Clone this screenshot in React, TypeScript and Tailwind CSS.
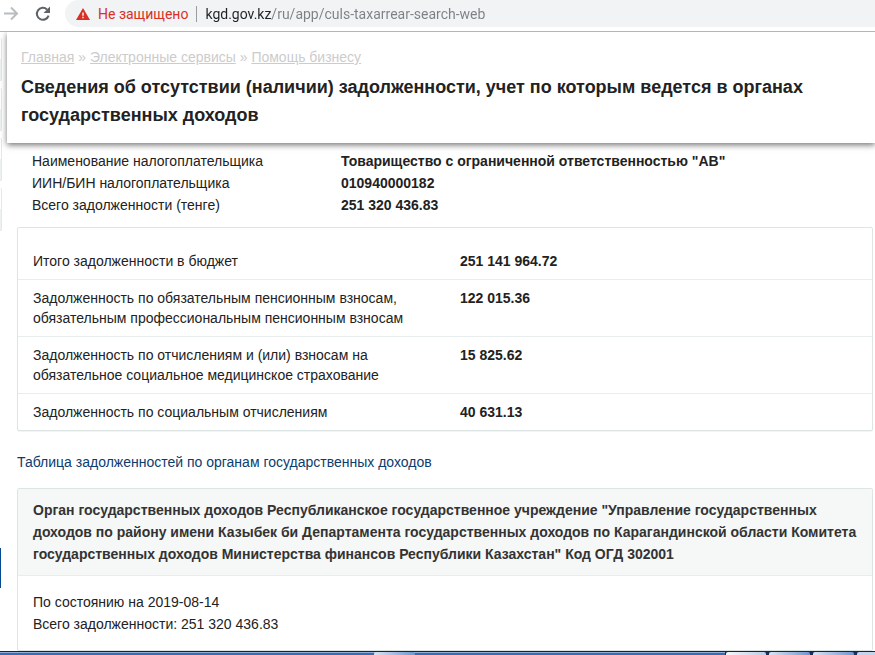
import { useState } from "react";

const crumbs = ["Главная", "Электронные сервисы", "Помощь бизнесу"];

const taxpayer = [
  { label: "Наименование налогоплательщика", value: 'Товарищество с ограниченной ответственностью "АВ"' },
  { label: "ИИН/БИН налогоплательщика", value: "010940000182" },
  { label: "Всего задолженности (тенге)", value: "251 320 436.83" },
];

const arrears = [
  { label: "Итого задолженности в бюджет", value: "251 141 964.72" },
  {
    label: "Задолженность по обязательным пенсионным взносам, обязательным профессиональным пенсионным взносам",
    value: "122 015.36",
  },
  {
    label: "Задолженность по отчислениям и (или) взносам на обязательное социальное медицинское страхование",
    value: "15 825.62",
  },
  { label: "Задолженность по социальным отчислениям", value: "40 631.13" },
];

function Toolbar() {
  const [url, setUrl] = useState("kgd.gov.kz/ru/app/culs-taxarrear-search-web");

  return (
    <header className="flex h-8 items-start border-b border-[#b6b4b6] bg-white font-[Roboto,sans-serif] text-sm">
      <div className="flex h-[27px] w-[65px] shrink-0 items-center gap-4 pl-1">
        <button type="button" aria-label="Вперед" className="text-[#babcbe]">
          <svg width="15" height="14" viewBox="0 0 15 14" fill="none" stroke="currentColor" strokeWidth="2">
            <path d="M0 6.5h13M7 .5l6 6-6 6" />
          </svg>
        </button>
        <button type="button" aria-label="Обновить" className="text-[#5f6368]">
          <svg width="16" height="16" viewBox="0 0 16 16">
            <path d="M13.6 9.6A6 6 0 1 1 12 3.4" fill="none" stroke="currentColor" strokeWidth="2" />
            <path d="M15 .5v6.5H8.5z" fill="currentColor" />
          </svg>
        </button>
      </div>
      <div className="flex h-[27px] min-w-0 flex-1 items-center rounded-l-full bg-[#f1f3f4] pl-[11px]">
        <svg width="14" height="12" viewBox="0 0 14 12" className="shrink-0">
          <path d="M7 0l7 12H0z" fill="#d93025" />
          <path d="M6.3 4.5h1.4v3.2H6.3zM6.3 8.8h1.4v1.4H6.3z" fill="#fff" />
        </svg>
        <span className="ml-2 whitespace-nowrap text-[#d93025]">Не защищено</span>
        <span className="mx-2 h-4 w-px shrink-0 bg-[#9a9c9f]" />
        <input
          type="text"
          aria-label="Адресная строка"
          value={url}
          onChange={(e) => setUrl(e.target.value)}
          className="min-w-0 flex-1 bg-[linear-gradient(90deg,#202124_67px,#7c8084_67px)] bg-clip-text text-transparent outline-none"
        />
      </div>
    </header>
  );
}

function SideTabs() {
  return (
    <aside className="flex w-[7px] shrink-0 flex-col gap-[7px] pt-[6px]">
      {[0, 1, 2, 3].map((i) => (
        <div
          key={i}
          className="h-[43px] w-[2px] rounded-r-sm border-r border-b border-[#e3e8e8] bg-[linear-gradient(#ffffff_50%,#eef1f1_50%)]"
        />
      ))}
      <div className="mt-[310px] h-10 w-px bg-[#064a92]" />
    </aside>
  );
}

function PageHeader() {
  return (
    <div className="bg-white px-[14px] py-[14px] shadow-[0_2px_6px_rgba(0,0,0,0.55)]">
      <nav className="leading-[22px] text-[#cccccc]">
        {crumbs.map((c, i) => (
          <span key={c}>
            {i > 0 && " » "}
            <a href="#" className="underline">{c}</a>
          </span>
        ))}
      </nav>
      <h1 className="mt-[5px] text-lg leading-7 font-bold text-[#222222]">
        Сведения об отсутствии (наличии) задолженности, учет по которым ведется в органах государственных доходов
      </h1>
    </div>
  );
}

function Taskbar() {
  return (
    <footer className="flex h-1 items-stretch border-t border-[#14233f] bg-[linear-gradient(#8fb0dc_1px,#3a6cb4_1px)]">
      <div className="ml-[374px] w-[41px] rounded-t-xs bg-linear-to-r from-[#d9e4f3] to-[#6f98d0]" />
      <div className="ml-auto flex gap-[3px] bg-[#16305c] pl-px">
        <div className="w-10 rounded-t-xs bg-linear-to-r from-[#f4f8fc] to-[#b9cee9]" />
        <div className="w-[41px] rounded-t-xs bg-linear-to-r from-[#d9e4f3] to-[#6f98d0]" />
        <div className="w-[41px] rounded-t-xs bg-linear-to-r from-[#d9e4f3] to-[#6f98d0]" />
        <div className="w-[18px] rounded-tl-xs bg-[#c3d5ec]" />
      </div>
    </footer>
  );
}

export default function App() {
  return (
    <div className="flex min-h-screen flex-col bg-white font-['Liberation_Sans',Arial,sans-serif] text-sm text-[#222222]">
      <Toolbar />
      <div className="flex flex-1 overflow-hidden">
        <SideTabs />
        <main className="min-w-0 flex-1">
          <PageHeader />

          <div className="pt-[7px] pr-[2px] pl-[10px]">
            <dl className="grid grid-cols-[309px_1fr] pl-[15px] leading-[22px]">
              {taxpayer.map((row) => (
                <div key={row.label} className="contents">
                  <dt>{row.label}</dt>
                  <dd className="font-bold">{row.value}</dd>
                </div>
              ))}
            </dl>

            <section className="mt-[11px] rounded-xs border border-[#dde4e4] pt-[15px] shadow-[0_1px_1px_rgba(0,0,0,0.05)]">
              <table className="w-full table-fixed border-collapse leading-5">
                <tbody className="divide-y divide-[#e8eded]">
                  {arrears.map((row) => (
                    <tr key={row.label}>
                      <th scope="row" className="w-1/2 px-[15px] py-2 text-left align-top font-normal">
                        {row.label}
                      </th>
                      <td className="px-[15px] py-2 align-top font-bold">{row.value}</td>
                    </tr>
                  ))}
                </tbody>
              </table>
            </section>

            <h2 className="mt-5 leading-[22px] text-[#0c3c6e]">Таблица задолженностей по органам государственных доходов</h2>

            <section className="mt-[15px] rounded-xs border border-[#dde4e4] leading-[22px]">
              <h3 className="border-b border-[#e8eded] bg-[#f5f8f7] px-[15px] py-[10px] font-bold text-[#333333]">
                Орган государственных доходов Республиканское государственное учреждение "Управление государственных
                доходов по району имени Казыбек би Департамента государственных доходов по Карагандинской области
                Комитета государственных доходов Министерства финансов Республики Казахстан" Код ОГД 302001
              </h3>
              <div className="p-[15px]">
                <p>По состоянию на 2019-08-14</p>
                <p>Всего задолженности: 251 320 436.83</p>
              </div>
            </section>
          </div>
        </main>
      </div>
      <Taskbar />
    </div>
  );
}
